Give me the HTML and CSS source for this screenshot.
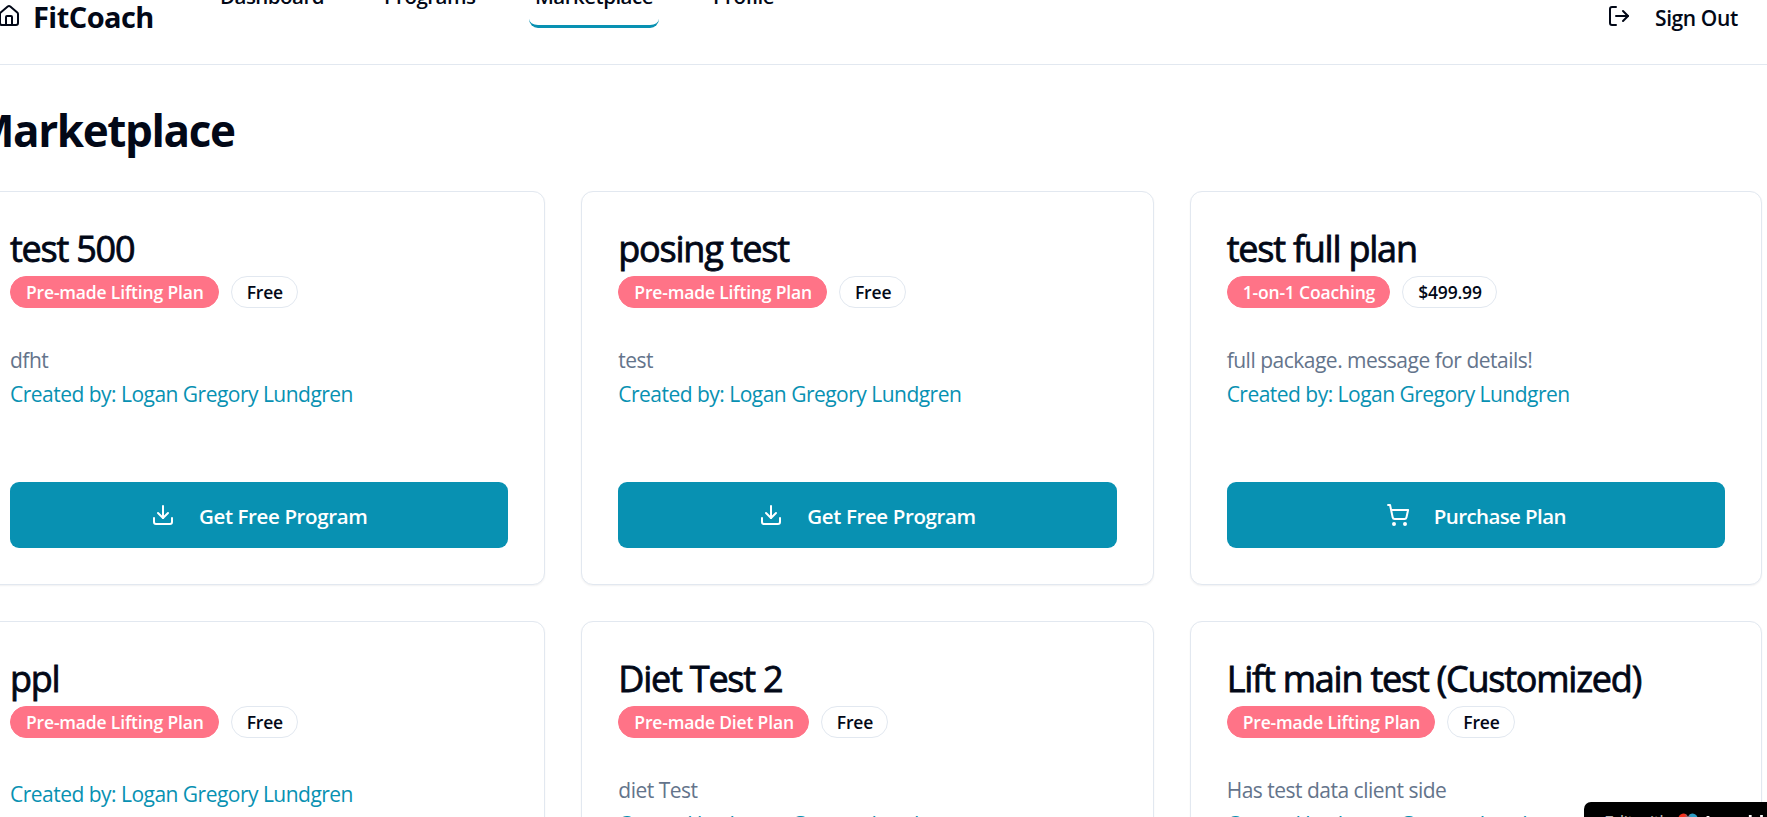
FILE: index.html
```html
<!DOCTYPE html>
<html lang="en">
<head>
<meta charset="utf-8">
<title>FitCoach Marketplace</title>
<link rel="stylesheet" href="styles.css">
</head>
<body>
<svg class="sprite" aria-hidden="true">
  <symbol id="download" viewBox="0 0 24 24"><path d="M21 15v4a2 2 0 0 1-2 2H5a2 2 0 0 1-2-2v-4"/><path d="M7 10l5 5 5-5"/><path d="M12 15V3"/></symbol>
  <symbol id="cart" viewBox="0 0 24 24"><circle cx="8" cy="21" r="1"/><circle cx="19" cy="21" r="1"/><path d="M2.05 2.05h2l2.66 12.42a2 2 0 0 0 2 1.58h9.78a2 2 0 0 0 1.95-1.57l1.65-7.43H5.12"/></symbol>
</svg>
<header class="topbar">
  <a class="brand">
    <svg class="icon" viewBox="0 0 24 24"><path d="M15 21v-8a1 1 0 0 0-1-1h-4a1 1 0 0 0-1 1v8"/><path d="M3 10a2 2 0 0 1 .709-1.528l7-5.999a2 2 0 0 1 2.582 0l7 5.999A2 2 0 0 1 21 10v9a2 2 0 0 1-2 2H5a2 2 0 0 1-2-2z"/></svg>
    <span class="brand-name">FitCoach</span>
  </a>
  <nav class="nav">
    <a class="nav-link dashboard">Dashboard</a>
    <a class="nav-link programs">Programs</a>
    <a class="nav-link active">Marketplace</a>
    <a class="nav-link profile">Profile</a>
  </nav>
  <a class="signout">
    <svg class="icon" viewBox="0 0 24 24"><path d="M9 21H5a2 2 0 0 1-2-2V5a2 2 0 0 1 2-2h4"/><path d="M16 17l5-5-5-5"/><path d="M21 12H9"/></svg>
    <span class="signout-label">Sign Out</span>
  </a>
</header>
<main class="main">
  <h1 class="page-title">Marketplace</h1>
  <div class="grid">
    <article class="card">
      <h3 class="title">test 500</h3>
      <div class="badges"><span class="badge kind">Pre-made Lifting Plan</span><span class="badge price">Free</span></div>
      <p class="desc">dfht</p>
      <p class="author">Created by: Logan Gregory Lundgren</p>
      <button class="action"><svg class="icon"><use href="#download"/></svg><span>Get Free Program</span></button>
    </article>
    <article class="card">
      <h3 class="title">posing test</h3>
      <div class="badges"><span class="badge kind">Pre-made Lifting Plan</span><span class="badge price">Free</span></div>
      <p class="desc">test</p>
      <p class="author">Created by: Logan Gregory Lundgren</p>
      <button class="action"><svg class="icon"><use href="#download"/></svg><span>Get Free Program</span></button>
    </article>
    <article class="card">
      <h3 class="title">test full plan</h3>
      <div class="badges"><span class="badge kind">1-on-1 Coaching</span><span class="badge price">$499.99</span></div>
      <p class="desc">full package. message for details!</p>
      <p class="author">Created by: Logan Gregory Lundgren</p>
      <button class="action buy"><svg class="icon"><use href="#cart"/></svg><span>Purchase Plan</span></button>
    </article>
    <article class="card">
      <h3 class="title">ppl</h3>
      <div class="badges"><span class="badge kind">Pre-made Lifting Plan</span><span class="badge price">Free</span></div>
      <p class="author">Created by: Logan Gregory Lundgren</p>
    </article>
    <article class="card">
      <h3 class="title">Diet Test 2</h3>
      <div class="badges"><span class="badge kind">Pre-made Diet Plan</span><span class="badge price">Free</span></div>
      <p class="desc">diet Test</p>
      <p class="author">Created by: Logan Gregory Lundgren</p>
    </article>
    <article class="card">
      <h3 class="title">Lift main test (Customized)</h3>
      <div class="badges"><span class="badge kind">Pre-made Lifting Plan</span><span class="badge price">Free</span></div>
      <p class="desc">Has test data client side</p>
      <p class="author">Created by: Logan Gregory Lundgren</p>
    </article>
  </div>
</main>
<aside class="edit-badge">
  <span class="edit-label">Edit with</span>
  <svg class="heart" viewBox="0 0 20 20"><defs><linearGradient id="heart-fill" x1="0" x2="1" y1="0" y2="0"><stop offset=".3" stop-color="#f5301c"/><stop offset=".65" stop-color="#2b9cc4"/></linearGradient></defs><path fill="url(#heart-fill)" d="M10 19C4 15 .5 11 .5 6a5 5 0 0 1 9.5-2.500a5 5 0 0 1 9.500 2.500c0 5-3.500 9-9.500 13z"/></svg>
  <span class="edit-name">Lovable</span>
</aside>
</body>
</html>
```
FILE: styles.css
```css
* { box-sizing: border-box; }
html, body { height: 100%; overflow: hidden; }
body { margin: 0; background: #fff; color: #020817; font-family: "Open Sans", "Noto Sans", sans-serif; font-size: 21px; line-height: 30px; }
h1, h3, p { margin: 0; }
.sprite { display: none; }
.icon { width: 24px; height: 24px; flex: none; fill: none; stroke: currentColor; stroke-width: 2; stroke-linecap: round; stroke-linejoin: round; }

.topbar { height: 65px; border-bottom: 1px solid #e2e8f0; display: flex; align-items: flex-start; white-space: nowrap; }
.brand { display: flex; gap: 12px; width: 222px; margin-left: -3px; padding-top: 4px; }
.brand-name { font-size: 29px; font-weight: 700; line-height: 26px; letter-spacing: -0.55px; }
.nav { display: flex; flex: 1; margin-top: -30px; }
.nav-link { height: 58px; padding-top: 11px; font-weight: 600; font-size: 20.5px; letter-spacing: -0.52px; width: 164px; }
.nav-link.dashboard { padding-left: 1px; }
.nav-link.programs { width: 146px; padding-left: 1px; }
.nav-link.active { width: 130px; padding-left: 6px; border-bottom: 3px solid #0891b2; border-radius: 9px; }
.nav-link.profile { padding-left: 54px; }
.signout { display: flex; gap: 24px; width: 160px; padding-top: 4px; font-weight: 600; font-size: 21px; line-height: 28px; letter-spacing: -0.4px; }

.main { width: 1789px; margin-left: -27px; padding-top: 40px; }
.page-title { font-size: 44px; line-height: 50px; height: 86px; font-weight: 700; letter-spacing: -1.4px; }
.grid { display: grid; grid-template-columns: repeat(3, 1fr); gap: 36px; grid-auto-rows: 394px; }
.card { border: 1px solid #e2e8f0; border-radius: 12px; padding: 36px; display: flex; flex-direction: column; box-shadow: 0 1px 2px rgba(15, 23, 42, .06); white-space: nowrap; background: #fff; }
.title { font-size: 36px; line-height: 37px; margin-top: 2px; height: 46px; font-weight: 500; letter-spacing: -1.230px; -webkit-text-stroke: 0.8px currentColor; }
.badges { display: flex; gap: 12px; margin-bottom: 37px; }
.badge { height: 32px; border-radius: 16px; padding: 0 14px 0 15px; border: 1px solid #e2e8f0; font-size: 17.500px; line-height: 31px; font-weight: 600; letter-spacing: -0.17px; }
.badge.kind { background: #ff7387; border-color: #ff7387; color: #fff; }
.desc { color: #64748b; height: 30px; letter-spacing: -0.5px; }
.author { color: #0891b2; margin-top: 4px; letter-spacing: -0.52px; }
.action { margin-top: auto; height: 66px; border: 0; border-radius: 9px; background: #0891b2; color: #fff; display: flex; align-items: center; justify-content: center; gap: 24px; font: 600 20.5px/30px "Open Sans", "Noto Sans", sans-serif; letter-spacing: -0.38px; }
.action.buy { letter-spacing: -0.6px; }
.action .icon { margin-top: -1px; }
.action span { padding-top: 2px; }

.edit-badge { position: fixed; left: 1584px; top: 802px; width: 220px; height: 42px; border-radius: 7px; background: #000; color: #fff; display: flex; gap: 7px; padding: 9px 0 0 20px; font-size: 18px; line-height: 22px; white-space: nowrap; }
.edit-label { width: 67px; color: #b5b5b5; letter-spacing: -.8px; }
.heart { width: 20px; height: 20px; margin-top: 2px; }
.edit-name { font-weight: 700; }
```
